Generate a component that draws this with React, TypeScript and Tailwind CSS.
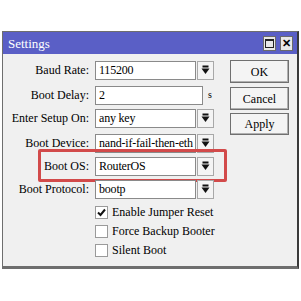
import React from "react";

const font = { fontFamily: '"Liberation Serif", "DejaVu Serif", serif' };

function Arrow() {
  return (
    <svg width="9" height="10" viewBox="0 0 9 10">
      <rect x="1.5" y="0.5" width="6" height="2" fill="#111" />
      <path d="M0.5 3.5 H8.5 L4.5 9 Z" fill="#111" />
    </svg>
  );
}

function Drop() {
  return (
    <div className="ml-[1px] flex h-[19px] w-[17px] items-center justify-center border border-[#a8a8a8] bg-[#f4f4f4]">
      <Arrow />
    </div>
  );
}

function Row({
  label,
  value,
  drop = true,
  unit,
  wide,
  children,
}: {
  label: string;
  value: string;
  drop?: boolean;
  unit?: string;
  wide?: boolean;
  children?: React.ReactNode;
}) {
  return (
    <div className="relative flex h-[20px] items-center">
      {children}
      <div className="w-[86px] text-right leading-none">{label}</div>
      <div
        className={`ml-[6px] flex h-[19px] items-center overflow-hidden border border-[#8a8a8a] bg-white pl-[3px] leading-none ${
          wide ? "w-[108px]" : "w-[101px]"
        }`}
      >
        <span className="whitespace-nowrap tracking-[-0.2px]">{value}</span>
      </div>
      {drop && <Drop />}
      {unit && <span className="ml-[5px] text-[10px] leading-none">{unit}</span>}
    </div>
  );
}

function Check({ label, checked }: { label: string; checked?: boolean }) {
  return (
    <div className="flex h-[14px] items-center pl-[92px]">
      <div className="flex h-[13px] w-[13px] items-center justify-center border border-[#9a9a9a] bg-white">
        {checked && (
          <svg width="9" height="9" viewBox="0 0 9 9">
            <path d="M1 4.5 L3.5 7 L8 1.5" stroke="#111" strokeWidth="2" fill="none" />
          </svg>
        )}
      </div>
      <span className="ml-[4px] leading-none">{label}</span>
    </div>
  );
}

function Btn({ label, h }: { label: string; h: number }) {
  return (
    <div
      className="flex w-[59px] items-center justify-center border border-[#707070] bg-[#f4f4f4] leading-none shadow-[inset_-1px_-1px_0_#b0b0b0]"
      style={{ height: h }}
    >
      {label}
    </div>
  );
}

export default function App() {
  return (
    <div className="h-[301px] w-[301px] bg-white pl-[2px] pt-[31px] text-[12px] text-black" style={font}>
      <div className="h-[238px] w-[297px] border-b-[3px] border-l border-r-2 border-t border-[#6e6e6e] border-r-[#3a3a3a] bg-[#f0f0f0]">
        <div className="flex h-[22px] items-center justify-between bg-[#5a5fc6] pl-[5px] pr-[4px]">
          <span className="text-[13px] leading-none text-white">Settings</span>
          <div className="flex gap-[4px]">
            <div className="flex h-[15px] w-[13px] items-center justify-center border border-[#6a6a6a] bg-[#e8e8e8]">
              <div className="h-[9px] w-[9px] border border-t-2 border-[#222]" />
            </div>
            <div className="flex h-[15px] w-[13px] items-center justify-center border border-[#6a6a6a] bg-[#e8e8e8] text-[11px] font-bold leading-none">
              ✕
            </div>
          </div>
        </div>
        <div className="flex pt-[6px]">
          <div className="flex w-[227px] flex-col">
            <Row label="Baud Rate:" value="115200" />
            <div className="mt-[5px]">
              <Row label="Boot Delay:" value="2" drop={false} unit="s" wide />
            </div>
            <div className="mt-[3px]">
              <Row label="Enter Setup On:" value="any key" />
            </div>
            <div className="mt-[5px]">
              <Row label="Boot Device:" value="nand-if-fail-then-eth" />
            </div>
            <div className="mt-[3px]">
              <Row label="Boot OS:" value="RouterOS">
                <div className="absolute left-[35px] top-[-7px] h-[33px] w-[189px] rounded-[2px] border-[3px] border-[#d24a4a]" />
              </Row>
            </div>
            <div className="mt-[3px]">
              <Row label="Boot Protocol:" value="bootp" />
            </div>
            <div className="mt-[6px] flex flex-col gap-[5px]">
              <Check label="Enable Jumper Reset" checked />
              <Check label="Force Backup Booter" />
              <Check label="Silent Boot" />
            </div>
          </div>
          <div className="flex flex-col">
            <Btn label="OK" h={23} />
            <div className="mt-[4px]">
              <Btn label="Cancel" h={23} />
            </div>
            <div className="mt-[3px]">
              <Btn label="Apply" h={22} />
            </div>
          </div>
        </div>
      </div>
    </div>
  );
}
